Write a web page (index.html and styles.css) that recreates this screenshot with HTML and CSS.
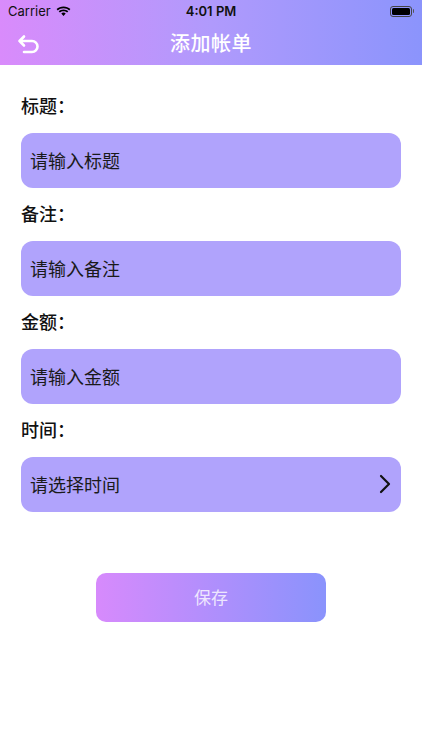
FILE: index.html
```html
<!DOCTYPE html>
<html lang="zh">
<head>
<meta charset="utf-8">
<link rel="stylesheet" href="styles.css">
</head>
<body>
<header class="header">
  <div class="status">
    <div class="status-left">
      <span class="carrier">Carrier</span>
      <svg class="wifi" width="15" height="11" viewBox="0 0 15 11">
        <path d="M7.5 2.2c2.2 0 4.2.8 5.7 2.2l1.2-1.3C12.6 1.4 10.2.4 7.5.4S2.4 1.4.6 3.1l1.2 1.3C3.3 3 5.3 2.2 7.5 2.2z" fill="#000"/>
        <path d="M7.5 5.2c1.4 0 2.6.5 3.6 1.4l1.2-1.3C11 4.1 9.3 3.4 7.5 3.4S4 4.1 2.7 5.3l1.2 1.3c1-.9 2.2-1.4 3.6-1.4z" fill="#000"/>
        <path d="M7.5 6.6c-.9 0-1.6.3-2.2.9l2.2 2.4 2.2-2.4c-.6-.6-1.3-.9-2.2-.9z" fill="#000"/>
      </svg>
    </div>
    <span class="time">4:01 PM</span>
    <div class="status-right">
      <span class="battery"><span class="battery-fill"></span></span>
      <span class="battery-tip"></span>
    </div>
  </div>
  <div class="nav">
    <svg class="back" width="24" height="20" viewBox="0 0 24 20">
      <path d="M7 2.5 L2.5 7 L7 11.5 M2.5 7 H15 A5.5 5.5 0 0 1 15 18 H7" fill="none" stroke="#fff" stroke-width="2.6" stroke-linecap="round" stroke-linejoin="round"/>
    </svg>
    <h1 class="title">添加帐单</h1>
  </div>
</header>
<main class="form">
  <div class="field first">
    <label class="label">标题：</label>
    <div class="input">请输入标题</div>
  </div>
  <div class="field">
    <label class="label">备注：</label>
    <div class="input">请输入备注</div>
  </div>
  <div class="field">
    <label class="label">金额：</label>
    <div class="input">请输入金额</div>
  </div>
  <div class="field">
    <label class="label">时间：</label>
    <div class="input picker">
      <span>请选择时间</span>
      <svg class="chev" width="12" height="20" viewBox="0 0 12 20">
        <path d="M2 2 L10 10 L2 18" fill="none" stroke="#111" stroke-width="2.2" stroke-linecap="round" stroke-linejoin="round"/>
      </svg>
    </div>
  </div>
  <div class="actions">
    <button class="save">保存</button>
  </div>
</main>
</body>
</html>
```

FILE: styles.css
```css
* { box-sizing: border-box; }
html, body { margin: 0; padding: 0; background: #fff; }
body {
  width: 422px;
  height: 750px;
  font-family: "Noto Sans CJK SC", "Noto Sans", "Liberation Sans", sans-serif;
  color: #111;
}
.header {
  height: 65px;
  background: linear-gradient(90deg, #d98bfb 0%, #b09afc 50%, #8b94fc 100%);
}
.status {
  height: 22px;
  display: flex;
  align-items: center;
  justify-content: space-between;
  padding: 0 8px;
}
.status-left { display: flex; align-items: center; gap: 5px; width: 100px; }
.carrier {
  font-family: "Inter", "Liberation Sans", sans-serif;
  font-size: 13px;
  color: #111;
  line-height: 1;
}
.wifi { display: block; }
.time {
  font-family: "Inter", "Liberation Sans", sans-serif;
  font-size: 13px;
  font-weight: 600;
  color: #111;
}
.status-right { width: 100px; display: flex; justify-content: flex-end; align-items: center; }
.battery {
  width: 22px; height: 11px;
  border: 1px solid #444;
  border-radius: 3px;
  padding: 1px;
  display: flex;
}
.battery-fill { flex: 1; background: #000; border-radius: 1.5px; }
.battery-tip { width: 1.5px; height: 4px; background: #555; border-radius: 0 1px 1px 0; margin-left: 1px; }
.nav {
  height: 43px;
  display: flex;
  align-items: center;
  justify-content: center;
  position: relative;
  padding-bottom: 2px;
}
.back { position: absolute; left: 17px; top: 12px; }
.title {
  margin: 0;
  font-size: 20px;
  font-weight: 500;
  color: #fff;
  letter-spacing: 0.5px;
}
.form { padding: 0 21px; }
.field { display: flex; flex-direction: column; }
.label {
  height: 53px;
  padding-top: 14px;
  font-size: 18px;
  font-weight: 500;
  color: #111;
  line-height: 22px;
}
.field.first .label { height: 68px; padding-top: 29px; }
.input {
  height: 55px;
  border-radius: 12px;
  background: #b0a3fc;
  display: flex;
  align-items: center;
  padding: 0 9px 2px;
  font-size: 18px;
  color: #1a1a1a;
}
.picker { justify-content: space-between; padding-right: 10px; }
.chev { display: block; }
.actions { display: flex; justify-content: center; padding-top: 61px; }
.save {
  width: 230px;
  height: 49px;
  border: 0;
  border-radius: 10px;
  padding: 0 0 3px;
  background: linear-gradient(90deg, #d78afc 0%, #8a93fc 100%);
  font-family: inherit;
  font-size: 17px;
  color: rgba(255,255,255,0.8);
}
```
